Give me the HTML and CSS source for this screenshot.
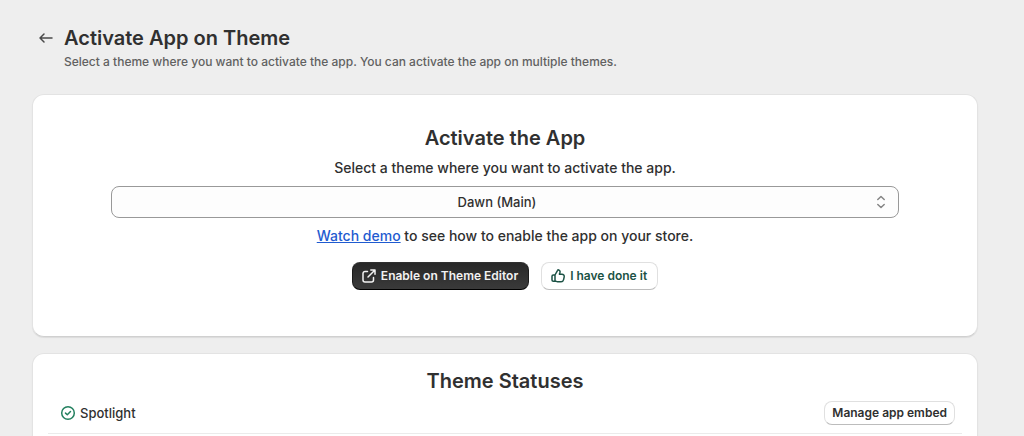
FILE: index.html
```html
<!DOCTYPE html>
<html lang="en">
<head>
  <meta charset="UTF-8">
  <meta name="viewport" content="width=device-width, initial-scale=1.0">
  <title>Activate App on Theme</title>
  <link rel="stylesheet" href="styles.css">
</head>
<body>
  <main class="page">
    <header class="page-header">
      <a class="back" href="#" aria-label="Back">
        <svg width="16" height="16" viewBox="0 0 16 16"><path d="M14 8H2M6 4L2 8L6 12"/></svg>
      </a>
      <div>
        <h1>Activate App on Theme</h1>
        <p>Select a theme where you want to activate the app. You can activate the app on multiple themes.</p>
      </div>
    </header>

    <section class="card activate">
      <h2>Activate the App</h2>
      <label for="theme">Select a theme where you want to activate the app.</label>
      <div class="select-wrap">
        <select id="theme">
          <option selected>Dawn (Main)</option>
          <option>Spotlight</option>
        </select>
        <svg class="select-icon" width="10" height="14" viewBox="0 0 10 14"><path d="M1.8 4.500L5 1.500L8.200 4.500M1.800 9.500L5 12.500L8.200 9.500"/></svg>
      </div>
      <p class="demo"><a href="#">Watch demo</a> to see how to enable the app on your store.</p>
      <div class="actions">
        <button type="button" class="btn primary">
          <svg width="16" height="16" viewBox="0 0 16 16"><path d="M9.800 2H14V6.200M14 2L7 9M6.500 3.500H4A2 2 0 0 0 2 5.500V12A2 2 0 0 0 4 14H10.500A2 2 0 0 0 12.500 12V9.500"/></svg>
          Enable on Theme Editor
        </button>
        <button type="button" class="btn done">
          <svg width="16" height="16" viewBox="0 0 16 16"><path d="M5 7L7.600 2.300C7.800 1.900 8.200 1.800 8.600 1.900C9.700 2.200 10.300 3.200 10 4.300L9.400 6.300H12C13.500 6.300 14.500 7.500 14.200 8.900L13.600 11.700C13.300 13 12.400 13.800 11.100 13.800H7.500C6.500 13.800 6 13 5 13M5 7V13M5 7H3.300C2.500 7 2 7.500 2 8.300V12C2 12.700 2.500 13.200 3.300 13.200H5"/></svg>
          I have done it
        </button>
      </div>
    </section>

    <section class="card statuses">
      <h2>Theme Statuses</h2>
      <ul>
        <li>
          <span class="theme-name">
            <svg width="16" height="16" viewBox="0 0 16 16"><circle cx="8" cy="8" r="6.300"/><path d="M5.500 8.100L7.300 9.800L10.500 6.500"/></svg>
            Spotlight
          </span>
          <button type="button" class="btn manage">Manage app embed</button>
        </li>
      </ul>
    </section>
  </main>
</body>
</html>
```
FILE: styles.css
```css
* {
  box-sizing: border-box;
}

body {
  margin: 0;
  background: #eeeeee;
  color: #303030;
  font-family: Inter, "Liberation Sans", sans-serif;
  font-size: 14px;
  font-weight: 500;
  line-height: 20px;
}

h1, h2, p, ul {
  margin: 0;
  padding: 0;
}

h1, h2 {
  font-size: 20px;
  font-weight: 600;
  line-height: 24px;
}

svg {
  flex: none;
  fill: none;
  stroke: currentColor;
  stroke-width: 1.5;
  stroke-linecap: round;
  stroke-linejoin: round;
}

.page {
  padding: 26px 46px 0 32px;
}

.page-header {
  display: flex;
  gap: 10px;
  padding-left: 6px;
  margin-bottom: 22px;
}

.page-header p {
  margin-top: 2px;
  color: #616161;
  font-size: 12px;
}

.back {
  height: 24px;
  padding-top: 4px;
  color: #4a4a4a;
}

.card {
  display: flex;
  flex-direction: column;
  margin-bottom: 16px;
  border: 1px solid #e3e3e3;
  border-bottom-color: #d0d0d0;
  border-radius: 12px;
  background: #fff;
  box-shadow: 0 1px 1px rgba(0, 0, 0, 0.08);
}

.activate {
  align-items: center;
  padding: 31px 78px 46px;
}

.activate label {
  margin: 8px 0;
}

.select-wrap {
  position: relative;
  width: 100%;
}

.select-wrap select {
  display: block;
  width: 100%;
  height: 32px;
  padding: 0 28px 0 12px;
  border: 1px solid #999;
  border-radius: 8px;
  background: #fdfdfd;
  color: inherit;
  font: inherit;
  font-size: 13px;
  text-align: center;
  text-align-last: center;
  appearance: none;
}

.select-icon {
  position: absolute;
  top: 9px;
  right: 13px;
  color: #858585;
  pointer-events: none;
}

.demo {
  margin: 8px 0 16px;
}

.demo a {
  color: #1f5bd0;
}

.actions {
  display: flex;
  gap: 12px;
}

.btn {
  display: flex;
  align-items: center;
  gap: 4px;
  height: 24px;
  padding: 0 10px 0 8px;
  border: 1px solid #e0e0e0;
  border-bottom-color: #bcbcbc;
  border-radius: 8px;
  background: #fff;
  color: #303030;
  font: inherit;
  font-size: 12px;
  font-weight: 600;
  cursor: pointer;
}

.actions .btn {
  height: 28px;
}

.btn.primary {
  border-color: #303030 #1a1a1a #000;
  background: linear-gradient(#282828, #3a3a3a);
  color: #f2f2f2;
}

.btn.done {
  color: #1c5245;
}

.btn.manage {
  padding: 0 7px;
}

.statuses {
  padding: 15px;
}

.statuses h2 {
  text-align: center;
}

.statuses ul {
  list-style: none;
}

.statuses li {
  display: flex;
  align-items: center;
  justify-content: space-between;
  padding: 8px 7px 8px 12px;
  border-bottom: 1px solid #ebebeb;
}

.theme-name {
  display: flex;
  align-items: center;
  gap: 4px;
  font-size: 13px;
}

.theme-name svg {
  color: #23805f;
}
```
